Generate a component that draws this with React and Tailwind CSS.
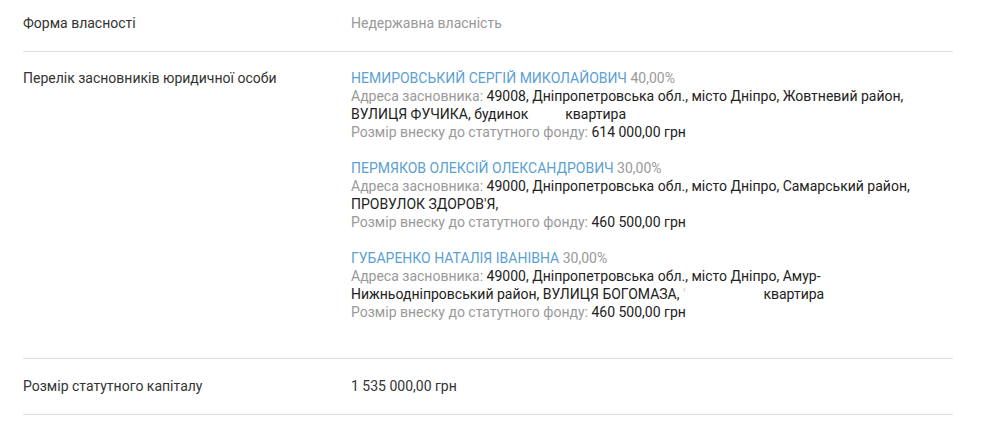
const founders = [
  {
    name: "НЕМИРОВСЬКИЙ СЕРГІЙ МИКОЛАЙОВИЧ",
    share: "40,00%",
    address: (
      <>
        49008, Дніпропетровська обл., місто Дніпро, Жовтневий район, ВУЛИЦЯ ФУЧИКА, будинок
        <span className="inline-block w-[37px]" />
        квартира
      </>
    ),
    amount: "614 000,00 грн",
  },
  {
    name: "ПЕРМЯКОВ ОЛЕКСІЙ ОЛЕКСАНДРОВИЧ",
    share: "30,00%",
    address: "49000, Дніпропетровська обл., місто Дніпро, Самарський район, ПРОВУЛОК ЗДОРОВ'Я,",
    amount: "460 500,00 грн",
  },
  {
    name: "ГУБАРЕНКО НАТАЛІЯ ІВАНІВНА",
    share: "30,00%",
    address: (
      <>
        49000, Дніпропетровська обл., місто Дніпро, Амур-Нижньодніпровський район, ВУЛИЦЯ БОГОМАЗА,{" "}
        <span className="text-[#ccc]">'</span>
        <span className="inline-block w-[78px]" />
        квартира
      </>
    ),
    amount: "460 500,00 грн",
  },
];

function Row({ label, children, className = "" }) {
  return (
    <div className={`grid grid-cols-[328px_1fr] border-b border-[#e0e0e0] ${className}`}>
      <div className="text-[#333]">{label}</div>
      <div>{children}</div>
    </div>
  );
}

export default function App() {
  return (
    <div className="min-h-screen bg-white pl-[23px] font-['Roboto',sans-serif] text-[14px] leading-[18px]">
      <div className="w-[930px]">
        <Row label="Форма власності" className="pt-[14px] pb-[19px]">
          <span className="text-[#999]">Недержавна власність</span>
        </Row>
        <Row label="Перелік засновників юридичної особи" className="pt-[17px] pb-[37px]">
          <div className="flex flex-col gap-[18px]">
            {founders.map((f) => (
              <div key={f.name} className="w-[570px]">
                <div>
                  <span className="text-[#5b9fd3]">{f.name}</span>{" "}
                  <span className="text-[#999]">{f.share}</span>
                </div>
                <div className="text-[#222]">
                  <span className="text-[#999]">Адреса засновника: </span>
                  {f.address}
                </div>
                <div className="text-[#222]">
                  <span className="text-[#999]">Розмір внеску до статутного фонду: </span>
                  {f.amount}
                </div>
              </div>
            ))}
          </div>
        </Row>
        <Row label="Розмір статутного капіталу" className="pt-[18px] pb-[19px]">
          <span className="text-[#333]">1 535 000,00 грн</span>
        </Row>
      </div>
    </div>
  );
}
